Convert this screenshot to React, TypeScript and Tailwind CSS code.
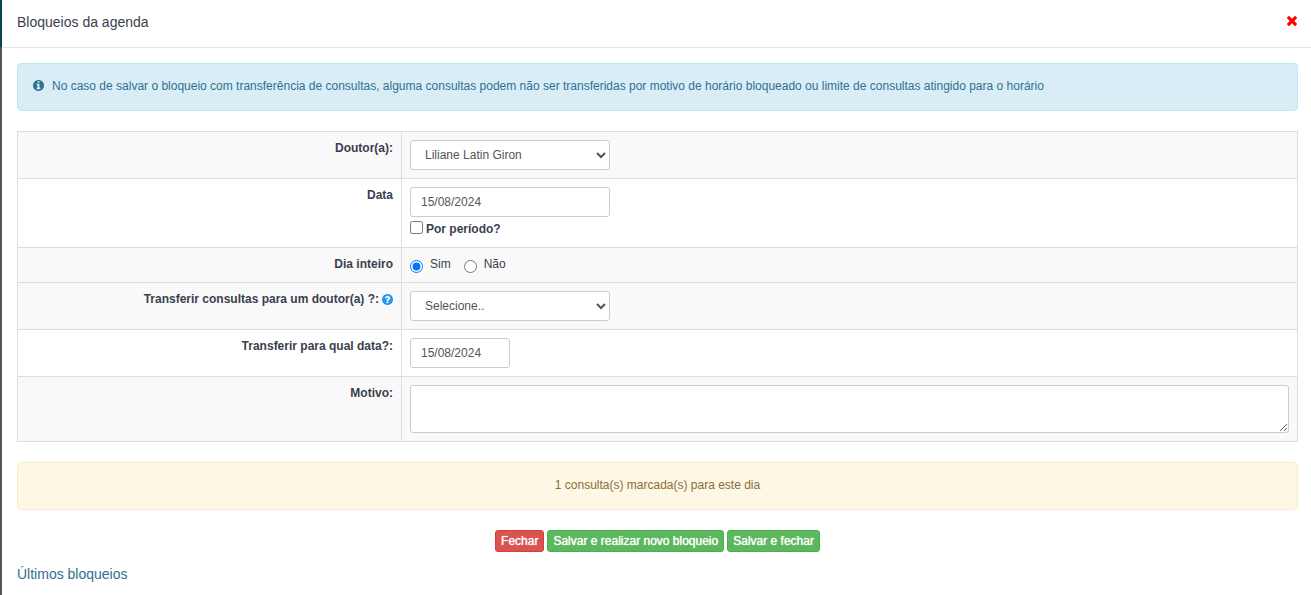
import React, { useState } from 'react';

interface IconProps {
  className?: string;
}

function InfoIcon({ className }: IconProps) {
  return (
    <svg viewBox="128 128 1536 1536" fill="currentColor" className={className} aria-hidden="true">
      <path d="M1152 1376v-160q0-14-9-23t-23-9h-96v-512q0-14-9-23t-23-9h-320q-14 0-23 9t-9 23v160q0 14 9 23t23 9h96v320h-96q-14 0-23 9t-9 23v160q0 14 9 23t23 9h448q14 0 23-9t9-23zm-128-896v-160q0-14-9-23t-23-9h-192q-14 0-23 9t-9 23v160q0 14 9 23t23 9h192q14 0 23-9t9-23zm640 416q0 209-103 385.5t-279.5 279.5-385.5 103-385.5-103-279.5-279.5-103-385.5 103-385.5 279.5-279.5 385.5-103 385.5 103 279.5 279.5 103 385.5z" />
    </svg>
  );
}

function QuestionIcon({ className }: IconProps) {
  return (
    <svg viewBox="128 128 1536 1536" fill="currentColor" className={className} aria-hidden="true">
      <path d="M1024 1376v-192q0-14-9-23t-23-9h-192q-14 0-23 9t-9 23v192q0 14 9 23t23 9h192q14 0 23-9t9-23zm256-672q0-88-55.5-163t-138.5-116-170-41q-243 0-371 213-15 24 8 42l132 100q7 6 19 6 16 0 25-12 53-68 86-92 34-24 86-24 48 0 85.5 26t37.5 59q0 38-20 61t-68 45q-63 28-115.5 86.5t-52.5 125.5v36q0 14 9 23t23 9h192q14 0 23-9t9-23q0-19 21.5-49.5t54.5-49.5q32-18 49-28.5t46-35 44.5-48 28-60.5 12.5-81zm384 192q0 209-103 385.5t-279.5 279.5-385.5 103-385.5-103-279.5-279.5-103-385.5 103-385.5 279.5-279.5 385.5-103 385.5 103 279.5 279.5 103 385.5z" />
    </svg>
  );
}

function CloseIcon({ className }: IconProps) {
  return (
    <svg viewBox="302 366 1188 1188" fill="currentColor" className={className} aria-hidden="true">
      <path d="M1490 1322q0 40-28 68l-136 136q-28 28-68 28t-68-28l-294-294-294 294q-28 28-68 28t-68-28l-136-136q-28-28-28-68t28-68l294-294-294-294q-28-28-28-68t28-68l136-136q28-28 68-28t68 28l294 294 294-294q28-28 68-28t68 28l136 136q28 28 28 68t-28 68l-294 294 294 294q28 28 28 68z" />
    </svg>
  );
}

interface FormRowProps {
  label: React.ReactNode;
  htmlFor?: string;
  striped?: boolean;
  children: React.ReactNode;
}

function FormRow({ label, htmlFor, striped = false, children }: FormRowProps) {
  return (
    <tr className={striped ? 'bg-[#f9f9f9]' : 'bg-white'}>
      <th scope="row" className="w-[30%] border border-[#ddd] p-2 text-right align-top font-bold">
        <label htmlFor={htmlFor} className="block">
          {label}
        </label>
      </th>
      <td className="border border-[#ddd] p-2 align-top">{children}</td>
    </tr>
  );
}

const fieldClass = 'block h-[30px] rounded-[3px] border border-[#ccc] bg-white px-2.5 text-[#555]';
const buttonClass = 'h-[22px] rounded-[3px] border px-[5px] text-white text-shadow-[0_0_1px_#fff]';

export default function App() {
  const [fullDay, setFullDay] = useState(true);

  return (
    <div className="relative min-h-screen border-l-2 border-[#555] bg-white font-['Liberation_Sans',Arial,sans-serif] text-xs leading-[17px] text-[#393f4d]">
      {/* page navbar showing behind the modal */}
      <div className="absolute top-0 -left-0.5 h-[47px] w-0.5 bg-[#0b4552]" />

      <header className="flex h-12 items-center justify-between border-b border-[#e5e5e5] pr-3.5 pb-1 pl-[15px]">
        <h4 className="text-sm">Bloqueios da agenda</h4>
        <button type="button" aria-label="Fechar janela" className="pb-0.5 text-[#f00]">
          <CloseIcon className="size-2.5" />
        </button>
      </header>

      <main className="py-[15px] pr-[13px] pl-[15px]">
        <div className="mb-5 flex min-h-12 items-start rounded-sm border border-[#bce8f1] bg-[#d9edf7] px-[15px] py-3.5 text-[#31708f]">
          <InfoIcon className="mt-0.5 mr-2 size-[11px] shrink-0" />
          <p>
            No caso de salvar o bloqueio com transferência de consultas, alguma consultas podem não ser transferidas por
            motivo de horário bloqueado ou limite de consultas atingido para o horário
          </p>
        </div>

        <table className="mb-5 w-full table-fixed border-collapse">
          <tbody>
            <FormRow label="Doutor(a):" htmlFor="doutor" striped>
              <select id="doutor" className={`${fieldClass} w-[200px]`}>
                <option>Liliane Latin Giron</option>
              </select>
            </FormRow>

            <FormRow label="Data" htmlFor="data">
              <input id="data" type="text" defaultValue="15/08/2024" className={`${fieldClass} w-[200px]`} />
              <label className="flex h-[22px] items-start gap-[3px] pt-1 font-bold">
                <input type="checkbox" className="size-[13px]" />
                <span>Por período?</span>
              </label>
            </FormRow>

            <FormRow label="Dia inteiro" striped>
              <div className="flex h-[18px] gap-[13px]">
                <label className="flex gap-[7px]">
                  <input
                    type="radio"
                    name="diaInteiro"
                    checked={fullDay}
                    onChange={() => setFullDay(true)}
                    className="mt-1 size-[13px]"
                  />
                  Sim
                </label>
                <label className="flex gap-[7px]">
                  <input
                    type="radio"
                    name="diaInteiro"
                    checked={!fullDay}
                    onChange={() => setFullDay(false)}
                    className="mt-1 size-[13px]"
                  />
                  Não
                </label>
              </div>
            </FormRow>

            <FormRow
              label={
                <span className="flex items-center justify-end gap-[3px]">
                  Transferir consultas para um doutor(a) ?:
                  <QuestionIcon className="size-[11px] text-[#2196f3]" />
                </span>
              }
              htmlFor="transferirDoutor"
              striped
            >
              <select id="transferirDoutor" className={`${fieldClass} w-[200px]`}>
                <option>Selecione..</option>
              </select>
            </FormRow>

            <FormRow label="Transferir para qual data?:" htmlFor="transferirData">
              <input id="transferirData" type="text" defaultValue="15/08/2024" className={`${fieldClass} w-[100px]`} />
            </FormRow>

            <FormRow label="Motivo:" htmlFor="motivo" striped>
              <textarea
                id="motivo"
                className="block h-12 w-full rounded-[3px] border border-[#ccc] bg-white px-2.5 py-1 text-[#555]"
              />
            </FormRow>
          </tbody>
        </table>

        <div className="mb-5 min-h-12 rounded-sm border border-[#faebcc] bg-[#fcf8e3] px-[15px] py-3.5 text-center text-[#8a6d3b]">
          1 consulta(s) marcada(s) para este dia
        </div>

        <div className="mb-3 flex justify-center gap-[3px]">
          <button type="button" className={`${buttonClass} border-[#d43f3a] bg-[#d9534f]`}>
            Fechar
          </button>
          <button type="button" className={`${buttonClass} border-[#4cae4c] bg-[#5cb85c]`}>
            Salvar e realizar novo bloqueio
          </button>
          <button type="button" className={`${buttonClass} border-[#4cae4c] bg-[#5cb85c]`}>
            Salvar e fechar
          </button>
        </div>

        <a href="#ultimos" className="text-sm text-[#31708f]">
          Últimos bloqueios
        </a>
      </main>
    </div>
  );
}
